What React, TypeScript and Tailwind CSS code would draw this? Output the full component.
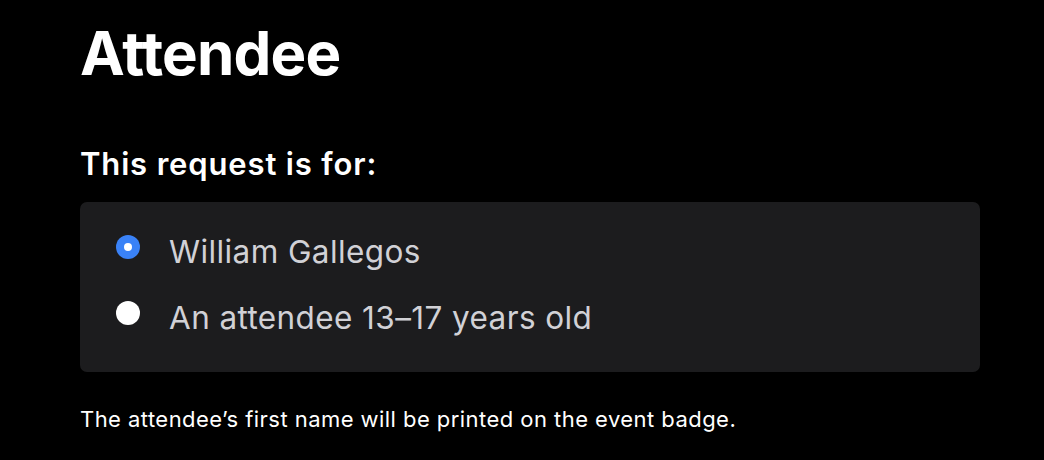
import React from 'react';

const options = [
  { id: 'self', label: 'William Gallegos', checked: true },
  { id: 'teen', label: 'An attendee 13–17 years old', checked: false },
];

const Radio: React.FC<{ checked: boolean }> = ({ checked }) =>
  checked ? (
    <span className="mt-[3px] flex h-[24px] w-[24px] shrink-0 items-center justify-center rounded-full bg-[#3a82f7]">
      <span className="h-[8px] w-[8px] rounded-full bg-white" />
    </span>
  ) : (
    <span className="mt-[3px] h-[24px] w-[24px] shrink-0 rounded-full bg-white" />
  );

export default function App() {
  return (
    <div className="h-[460px] w-[1044px] overflow-hidden bg-black font-['Inter',sans-serif] text-white">
      <div className="px-[80px] pt-[17px]">
        <h1 className="text-[60px] font-bold leading-[72px] tracking-[-0.8px]">Attendee</h1>
        <h2 className="mt-[57px] text-[31px] font-semibold leading-[36px] tracking-[0.85px]">
          This request is for:
        </h2>
        <div className="mt-[20px] flex h-[170px] w-[900px] flex-col gap-[26px] rounded-[7px] bg-[#1c1c1e] pl-[36px] pt-[30px]">
          {options.map((o) => (
            <label key={o.id} className="flex items-start gap-[29px]">
              <Radio checked={o.checked} />
              <span className="text-[31.5px] leading-[40px] tracking-[0.4px] text-[#d1d1d6]">{o.label}</span>
            </label>
          ))}
        </div>
        <p className="mt-[33px] text-[22px] leading-[28px] tracking-[0.45px]">
          The attendee’s first name will be printed on the event badge.
        </p>
      </div>
    </div>
  );
}
